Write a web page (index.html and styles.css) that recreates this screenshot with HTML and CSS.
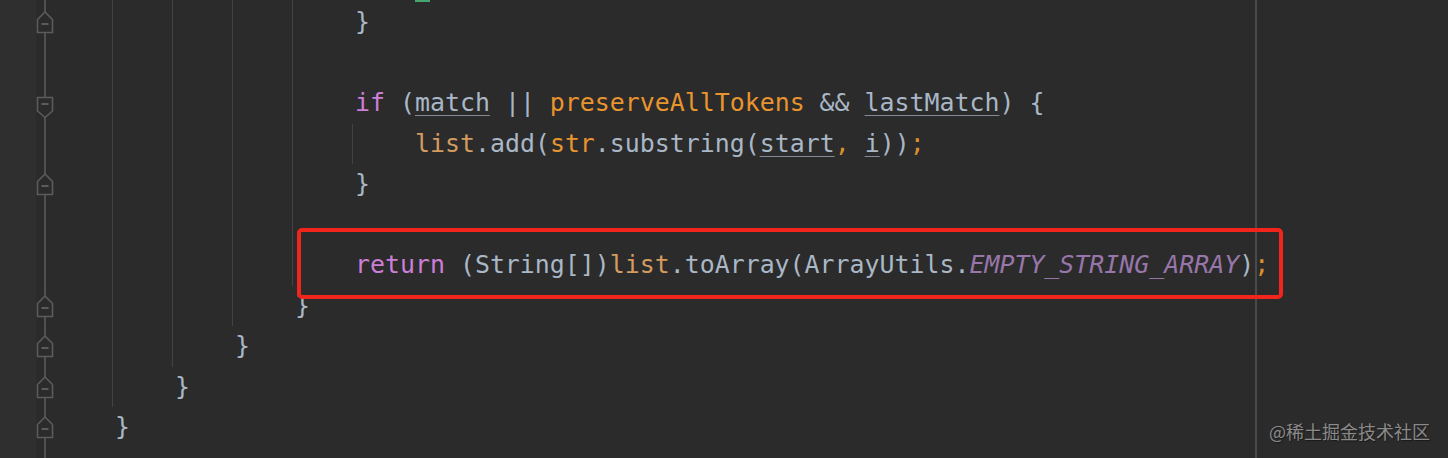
FILE: index.html
```html
<!DOCTYPE html>
<html lang="en">
<head>
<meta charset="utf-8">
<title>Editor</title>
<link rel="stylesheet" href="styles.css">
</head>
<body>
<div class="editor">
  <div class="lines">
    <div class="row">
      <div class="gutter"></div>
      <div class="code"><span class="g"></span><span class="g"></span><span class="g"></span><span class="g"></span><span class="txt">    <span class="hl"> </span></span></div>
    </div>
    <div class="row">
      <div class="gutter"><svg class="fold fold-end" width="18" height="23" viewBox="0 0 18 23"><path d="M1.5 8.5 L9 1 L16.5 8.5 V21.5 H1.5 Z"/><line x1="5.5" y1="13" x2="12.5" y2="13"/></svg></div>
      <div class="code"><span class="g"></span><span class="g"></span><span class="g"></span><span class="g"></span><span class="txt">}</span></div>
    </div>
    <div class="row">
      <div class="gutter"></div>
      <div class="code"><span class="g"></span><span class="g"></span><span class="g"></span><span class="g"></span></div>
    </div>
    <div class="row">
      <div class="gutter"><svg class="fold fold-start" width="18" height="23" viewBox="0 0 18 23"><path d="M1.5 1.5 H16.5 V15 L9 21.5 L1.5 15 Z"/><line x1="5.5" y1="8" x2="12.5" y2="8"/></svg></div>
      <div class="code"><span class="g"></span><span class="g"></span><span class="g"></span><span class="g"></span><span class="txt"><span class="kw">if</span> (<span class="u">match</span> || <span class="prm">preserveAllTokens</span> &amp;&amp; <span class="u">lastMatch</span>) {</span></div>
    </div>
    <div class="row">
      <div class="gutter"></div>
      <div class="code"><span class="g"></span><span class="g"></span><span class="g"></span><span class="g"></span><span class="g"></span><span class="txt"><span class="lv">list</span>.add(<span class="prm">str</span>.substring(<span class="u">start</span><span class="semi">,</span> <span class="u">i</span>))<span class="semi">;</span></span></div>
    </div>
    <div class="row">
      <div class="gutter"><svg class="fold fold-end" width="18" height="23" viewBox="0 0 18 23"><path d="M1.5 8.5 L9 1 L16.5 8.5 V21.5 H1.5 Z"/><line x1="5.5" y1="13" x2="12.5" y2="13"/></svg></div>
      <div class="code"><span class="g"></span><span class="g"></span><span class="g"></span><span class="g"></span><span class="txt">}</span></div>
    </div>
    <div class="row">
      <div class="gutter"></div>
      <div class="code"><span class="g"></span><span class="g"></span><span class="g"></span><span class="g"></span></div>
    </div>
    <div class="row">
      <div class="gutter"></div>
      <div class="code"><span class="g"></span><span class="g"></span><span class="g"></span><span class="g"></span><span class="txt"><span class="kw">return</span> (String[])<span class="lv">list</span>.toArray(ArrayUtils.<span class="const">EMPTY_STRING_ARRAY</span>)<span class="semi">;</span></span></div>
    </div>
    <div class="row">
      <div class="gutter"><svg class="fold fold-end" width="18" height="23" viewBox="0 0 18 23"><path d="M1.5 8.5 L9 1 L16.5 8.5 V21.5 H1.5 Z"/><line x1="5.5" y1="13" x2="12.5" y2="13"/></svg></div>
      <div class="code"><span class="g"></span><span class="g"></span><span class="g"></span><span class="txt">}</span></div>
    </div>
    <div class="row">
      <div class="gutter"><svg class="fold fold-end" width="18" height="23" viewBox="0 0 18 23"><path d="M1.5 8.5 L9 1 L16.5 8.5 V21.5 H1.5 Z"/><line x1="5.5" y1="13" x2="12.5" y2="13"/></svg></div>
      <div class="code"><span class="g"></span><span class="g"></span><span class="txt">}</span></div>
    </div>
    <div class="row">
      <div class="gutter"><svg class="fold fold-end" width="18" height="23" viewBox="0 0 18 23"><path d="M1.5 8.5 L9 1 L16.5 8.5 V21.5 H1.5 Z"/><line x1="5.5" y1="13" x2="12.5" y2="13"/></svg></div>
      <div class="code"><span class="g"></span><span class="txt">}</span></div>
    </div>
    <div class="row">
      <div class="gutter"><svg class="fold fold-end" width="18" height="23" viewBox="0 0 18 23"><path d="M1.5 8.5 L9 1 L16.5 8.5 V21.5 H1.5 Z"/><line x1="5.5" y1="13" x2="12.5" y2="13"/></svg></div>
      <div class="code"><span class="txt">}</span></div>
    </div>
    <div class="row">
      <div class="gutter"></div>
      <div class="code"></div>
    </div>
  </div>
  <div class="mark-box"></div>
  <div class="watermark">@稀土掘金技术社区</div>
</div>
</body>
</html>
```

FILE: styles.css
```css
html, body {
  margin: 0;
  padding: 0;
  background: #2b2b2b;
}

.editor {
  position: relative;
  width: 1448px;
  height: 458px;
  overflow: hidden;
  background:
    linear-gradient(to right, transparent 1255px, #4a4a4a 1255px, #4a4a4a 1257px, transparent 1257px),
    linear-gradient(to right, #2f2f2f 0, #2f2f2f 36px, #2b2b2b 36px);
}

.lines {
  margin-top: -38.5px;
  display: flex;
  flex-direction: column;
}

.row {
  display: flex;
  height: 40.5px;
}

.gutter {
  flex: none;
  width: 76px;
  padding-left: 36px;
  display: flex;
  align-items: flex-start;
  background: linear-gradient(to right, transparent 44px, #505050 44px, #505050 46px, transparent 46px);
}

.fold {
  display: block;
  fill: #2b2b2b;
  stroke: #5b5b5b;
  stroke-width: 1.6;
}

.fold line {
  stroke: #6a6a6a;
  stroke-width: 1.6;
}

.fold-end {
  margin-top: 9px;
}

.fold-start {
  margin-top: 13px;
}

.code {
  display: flex;
  align-items: stretch;
  flex: 1;
}

.g {
  flex: none;
  width: 60px;
  background: linear-gradient(to right, #424242 0, #424242 1px, transparent 1px);
}

.txt {
  padding-left: 3px;
  white-space: pre;
  font-family: "DejaVu Sans Mono", "Liberation Mono", monospace;
  font-size: 24.9px;
  line-height: 40.5px;
  color: #a9b7c6;
}

.hl {
  display: inline-block;
  width: 15px;
  height: 40.5px;
  vertical-align: top;
  box-shadow: inset 0 -3px 0 #46a46c;
}

.kw {
  color: #cc7fd6;
}

.prm {
  color: #e8942f;
}

.lv {
  color: #d39b5f;
}

.semi {
  color: #dc8f2c;
}

.const {
  color: #9876aa;
  font-style: italic;
}

.u {
  text-decoration: underline;
  text-decoration-color: #848b93;
  text-decoration-thickness: 1px;
  text-underline-offset: 4px;
}

.mark-box {
  position: absolute;
  left: 297px;
  top: 228px;
  width: 986px;
  height: 71px;
  box-sizing: border-box;
  border: 4px solid #f1251b;
  border-radius: 5px;
}

.watermark {
  position: absolute;
  right: 18px;
  top: 422px;
  font-family: "Noto Sans CJK SC", "Noto Sans", sans-serif;
  font-size: 18px;
  line-height: 18px;
  color: #8a8a8a;
  text-shadow: 1px 1px 1px #1a1a1a;
}
```
